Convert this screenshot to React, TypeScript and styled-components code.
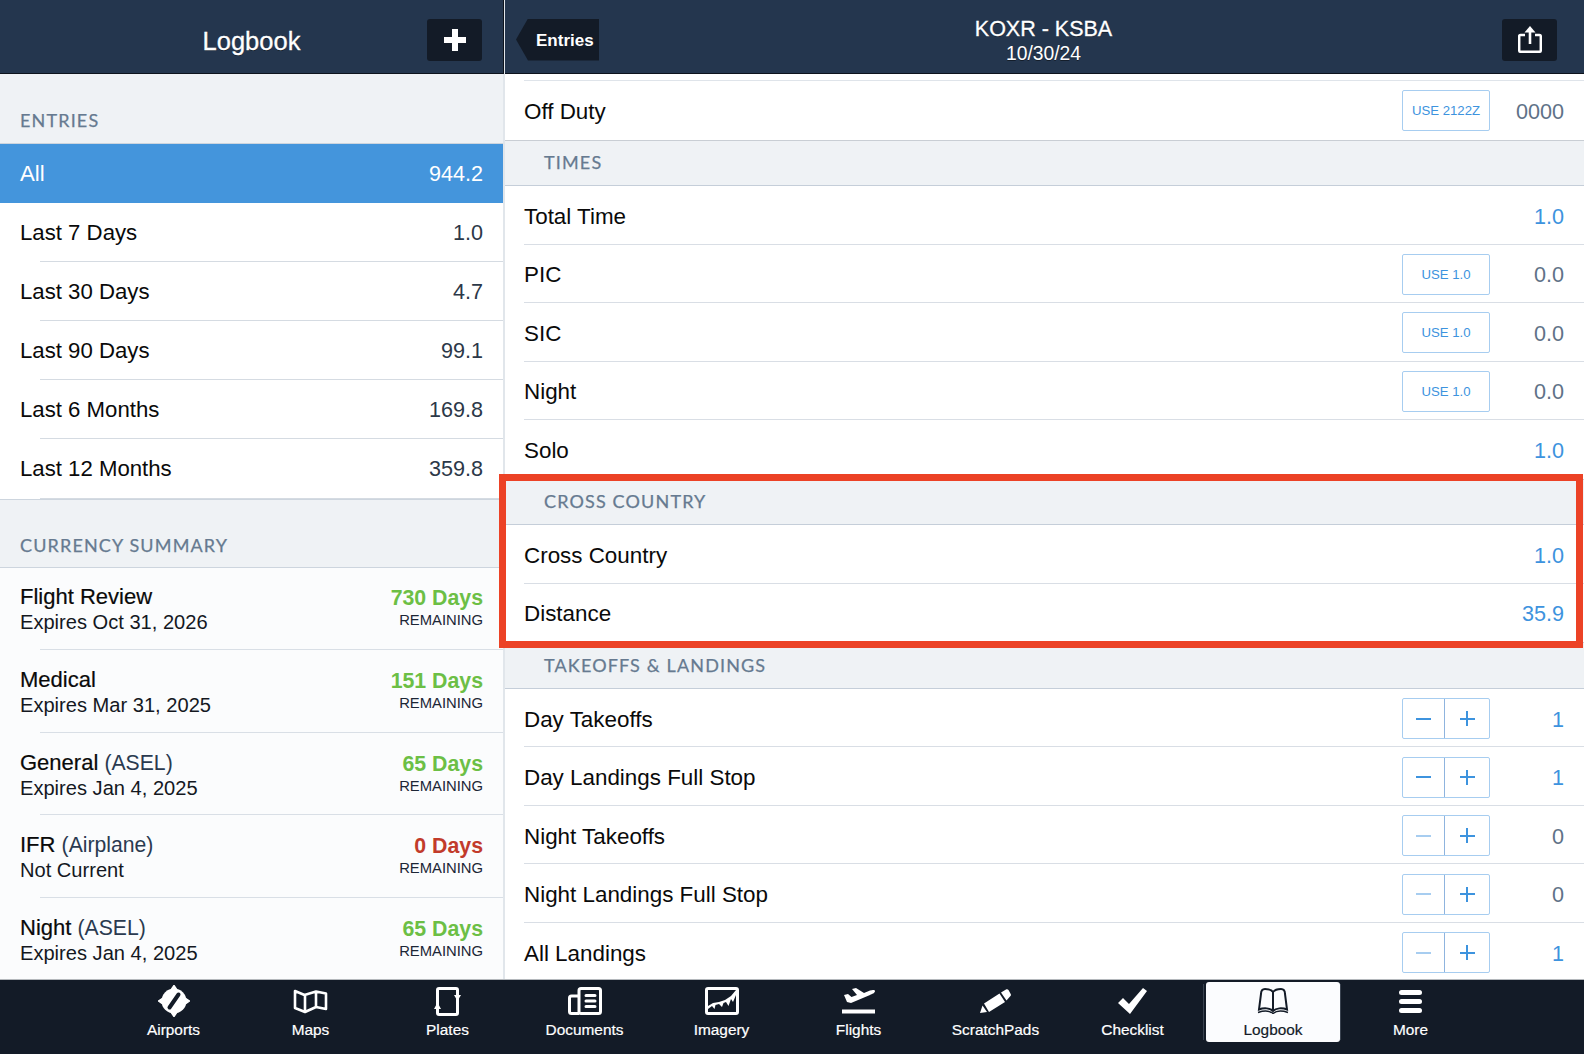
import { FC, ReactNode } from "react";
import styled, { createGlobalStyle } from "styled-components";

const GlobalStyle = createGlobalStyle`
  html, body {
    margin: 0;
    padding: 0;
    background: #fff;
  }
  body {
    font-family: "Liberation Sans", Arial, sans-serif;
    color: #0a0a0a;
  }
`;

const BAR = "#131b27";

const entries = [
  { label: "All", value: "944.2", active: true },
  { label: "Last 7 Days", value: "1.0" },
  { label: "Last 30 Days", value: "4.7" },
  { label: "Last 90 Days", value: "99.1" },
  { label: "Last 6 Months", value: "169.8" },
  { label: "Last 12 Months", value: "359.8" },
];

const currency = [
  { name: "Flight Review", kind: "", sub: "Expires Oct 31, 2026", days: "730 Days" },
  { name: "Medical", kind: "", sub: "Expires Mar 31, 2025", days: "151 Days" },
  { name: "General", kind: "(ASEL)", sub: "Expires Jan 4, 2025", days: "65 Days" },
  { name: "IFR", kind: "(Airplane)", sub: "Not Current", days: "0 Days", late: true },
  { name: "Night", kind: "(ASEL)", sub: "Expires Jan 4, 2025", days: "65 Days" },
];

const landings = [
  { label: "Day Takeoffs", value: "1", off: false, zero: false },
  { label: "Day Landings Full Stop", value: "1", off: false, zero: false },
  { label: "Night Takeoffs", value: "0", off: true, zero: true },
  { label: "Night Landings Full Stop", value: "0", off: true, zero: true },
  { label: "All Landings", value: "1", off: true, zero: false },
];

const AirportsIcon = () => (
  <svg width="32" height="32" viewBox="0 0 32 32">
    <circle cx="16" cy="16" r="12.5" fill="currentColor" />
    <path d="M14 3.5 L16 .5 L18 3.5 Z M14 28.5 L16 31.5 L18 28.5 Z M3.5 14 L.5 16 L3.5 18 Z M28.5 14 L31.5 16 L28.5 18 Z" fill="currentColor" stroke="currentColor" strokeWidth="1.5" />
    <line x1="20.5" y1="9.5" x2="11.5" y2="22.5" stroke={BAR} strokeWidth="4" strokeLinecap="round" />
  </svg>
);

const MapsIcon = () => (
  <svg width="35" height="25" viewBox="0 0 35 25">
    <path d="M2 2 L11.5 6 L23 2.5 L33 4.5 L33 20 L23 18 L12 23 L2 19 Z M12 6 V23 M23 2.5 V18" fill="none" stroke="currentColor" strokeWidth="2.6" strokeLinejoin="round" />
  </svg>
);

const PlatesIcon = () => (
  <svg width="27" height="29" viewBox="0 0 27 29">
    <rect x="3.5" y="1.5" width="20" height="26" rx="1.5" fill="none" stroke="currentColor" strokeWidth="3" />
    <path d="M20 8 H27 L23.5 14 Z M0 22 H7 L3.5 15.5 Z" fill="currentColor" />
  </svg>
);

const DocumentsIcon = () => (
  <svg width="34" height="28" viewBox="0 0 34 28">
    <rect x="11" y="1.5" width="21.5" height="25" rx="2" fill="none" stroke="currentColor" strokeWidth="3" />
    <path d="M11 9 H3.5 C2.3 9 1.5 9.8 1.5 11 V24.5 C1.5 25.7 2.3 26.5 3.5 26.5 H11" fill="none" stroke="currentColor" strokeWidth="3" />
    <path d="M18 8.5 H27 M18 14 H27 M18 19.5 H27" stroke="currentColor" strokeWidth="3" strokeLinecap="round" />
  </svg>
);

const ImageryIcon = () => (
  <svg width="34" height="28" viewBox="0 0 34 28">
    <rect x="1.5" y="1.5" width="31" height="25" rx="1.5" fill="none" stroke="currentColor" strokeWidth="3" />
    <path d="M3 19 L8 16 L14 15 L20 13 L26 9 L31 3 L31 8 L28 15 L26 12 L23.5 19 L21 15 L18.5 16 L17 20 L14 17 L10.5 18 L9.5 22 L7 19 L3 22 Z" fill="currentColor" />
  </svg>
);

const FlightsIcon = () => (
  <svg width="33" height="26" viewBox="0 0 33 26">
    <path d="M2 7 L6 6 L9.5 9 L15 7 L10 1 L14 0 L22 5 L28 2.5 C31 1.5 33 2 33 3 C33 5 30 6 28 7 L9 15 L5 14 Z" fill="currentColor" />
    <rect x="0" y="21.5" width="33" height="4" fill="currentColor" />
  </svg>
);

const ScratchPadsIcon = () => (
  <svg width="31" height="24" viewBox="0 0 31 24">
    <path d="M4 14.5 L19.5 4.5 L25 13 L9 23 Z M21 3.5 L26 .5 C27 0 28 .3 28.5 1 L30.7 5 C31.2 6 31 7 30 7.5 L26.5 11.5 Z M0 24 L2.5 16.5 L7 23 Z" fill="currentColor" />
  </svg>
);

const ChecklistIcon = () => (
  <svg width="29" height="26" viewBox="0 0 29 26">
    <path d="M0 15 L5 10 L11 16 L25 0 L29 3 L12 26 Z" fill="currentColor" />
  </svg>
);

const BookIcon = () => (
  <svg width="32" height="26" viewBox="0 0 32 26">
    <path d="M16 4 C14 1.5 11 1 8 1 C5 1 4 3 4 6 L2 21.5 C7 19.5 13 20 16 23 C19 20 25 19.5 30 21.5 L28 6 C28 3 27 1 24 1 C21 1 18 1.5 16 4 Z M16 4 V23" fill="none" stroke="currentColor" strokeWidth="2" />
    <path d="M1 24.5 C7 22.5 13 23 16 25.5 C19 23 25 22.5 31 24.5" fill="none" stroke="currentColor" strokeWidth="1.5" />
  </svg>
);

const MoreIcon = () => (
  <svg width="23" height="23" viewBox="0 0 23 23">
    <rect x="0" y="0" width="23" height="5" rx="2.5" fill="currentColor" />
    <rect x="0" y="9" width="23" height="5" rx="2.5" fill="currentColor" />
    <rect x="0" y="18" width="23" height="5" rx="2.5" fill="currentColor" />
  </svg>
);

const PlusIcon = () => (
  <svg width="22" height="22" viewBox="0 0 22 22">
    <path d="M11 0 V22 M0 11 H22" stroke="#fff" strokeWidth="6" />
  </svg>
);

const ShareIcon = () => (
  <svg width="24" height="27" viewBox="0 0 24 27">
    <path d="M7 9 H2.5 C1.6 9 1.2 9.5 1.2 10.4 V24.2 C1.2 25.2 1.7 25.8 2.6 25.8 H21.4 C22.3 25.8 22.8 25.2 22.8 24.2 V10.4 C22.8 9.5 22.4 9 21.5 9 H17" fill="none" stroke="#fff" strokeWidth="2.5" />
    <path d="M12 4 V18" stroke="#fff" strokeWidth="2.6" />
    <path d="M6.5 6.5 L12 0 L17.5 6.5 Z" fill="#fff" />
  </svg>
);

const tabs: { label: string; icon: ReactNode; active?: boolean }[] = [
  { label: "Airports", icon: <AirportsIcon /> },
  { label: "Maps", icon: <MapsIcon /> },
  { label: "Plates", icon: <PlatesIcon /> },
  { label: "Documents", icon: <DocumentsIcon /> },
  { label: "Imagery", icon: <ImageryIcon /> },
  { label: "Flights", icon: <FlightsIcon /> },
  { label: "ScratchPads", icon: <ScratchPadsIcon /> },
  { label: "Checklist", icon: <ChecklistIcon /> },
  { label: "Logbook", icon: <BookIcon />, active: true },
  { label: "More", icon: <MoreIcon /> },
];

const Stepper: FC<{ off?: boolean }> = ({ off }) => (
  <StepperBox>
    <StepperHalf>
      <Minus $off={off} />
    </StepperHalf>
    <StepperHalf>
      <Cross />
    </StepperHalf>
  </StepperBox>
);

const TimeRow: FC<{ label: string; value: string; use?: string; muted?: boolean; last?: boolean }> = (props) => (
  <FormRow $last={props.last}>
    <FormLabel>{props.label}</FormLabel>
    {props.use && <UseButton>{props.use}</UseButton>}
    <FormValue $muted={props.muted}>{props.value}</FormValue>
  </FormRow>
);

const App: FC = () => {
  return (
    <Page>
      <GlobalStyle />
      <Panes>
        <LeftPane>
          <LeftHeader>
            <span />
            <HeaderTitle>Logbook</HeaderTitle>
            <DarkButton>
              <PlusIcon />
            </DarkButton>
          </LeftHeader>
          <ListHead $first>ENTRIES</ListHead>
          {entries.map((e) => (
            <EntryRow key={e.label} $active={e.active}>
              <span>{e.label}</span>
              <span>{e.value}</span>
            </EntryRow>
          ))}
          <ListHead>CURRENCY SUMMARY</ListHead>
          {currency.map((c) => (
            <CurrencyRow key={c.name + c.sub}>
              <CurrencyLeft>
                <CurrencyName>
                  {c.name} {c.kind && <CurrencyKind>{c.kind}</CurrencyKind>}
                </CurrencyName>
                <CurrencySub>{c.sub}</CurrencySub>
              </CurrencyLeft>
              <CurrencyRight>
                <Days $late={c.late}>{c.days}</Days>
                <Remaining>REMAINING</Remaining>
              </CurrencyRight>
            </CurrencyRow>
          ))}
        </LeftPane>

        <RightPane>
          <RightHeader>
            <BackButton>Entries</BackButton>
            <RouteBlock>
              <Route>KOXR - KSBA</Route>
              <RouteDate>10/30/24</RouteDate>
            </RouteBlock>
            <ShareButton>
              <ShareIcon />
            </ShareButton>
          </RightHeader>
          <FormBody>
            <FirstLine />
            <TimeRow label="Off Duty" value="0000" use="USE 2122Z" muted last />
            <FormSection>TIMES</FormSection>
            <TimeRow label="Total Time" value="1.0" />
            <TimeRow label="PIC" value="0.0" use="USE 1.0" muted />
            <TimeRow label="SIC" value="0.0" use="USE 1.0" muted />
            <TimeRow label="Night" value="0.0" use="USE 1.0" muted />
            <TimeRow label="Solo" value="1.0" last />
            <FormSection>CROSS COUNTRY</FormSection>
            <TimeRow label="Cross Country" value="1.0" />
            <TimeRow label="Distance" value="35.9" last />
            <FormSection>TAKEOFFS &amp; LANDINGS</FormSection>
            {landings.map((l) => (
              <FormRow key={l.label}>
                <FormLabel>{l.label}</FormLabel>
                <Stepper off={l.off} />
                <FormValue $muted={l.zero}>{l.value}</FormValue>
              </FormRow>
            ))}
          </FormBody>
        </RightPane>
      </Panes>

      <TabBar>
        {tabs.map((t) => (
          <Tab key={t.label} $active={t.active}>
            <TabIcon>{t.icon}</TabIcon>
            <TabLabel>{t.label}</TabLabel>
          </Tab>
        ))}
      </TabBar>

      <Highlight />
    </Page>
  );
};

export default App;

const Page = styled.div`
  position: relative;
  width: 1584px;
  height: 1054px;
  overflow: hidden;
  display: flex;
  flex-direction: column;
`;

const Panes = styled.div`
  flex: none;
  height: 980px;
  display: flex;
  border-bottom: 1px solid #b4b8bc;
  box-sizing: border-box;
  overflow: hidden;
`;

const LeftPane = styled.div`
  flex: none;
  width: 505px;
  box-sizing: border-box;
  border-right: 2px solid #e1e6eb;
  background: #eff2f5;
`;

const RightPane = styled.div`
  flex: 1;
  min-width: 0;
  background: #fff;
`;

const LeftHeader = styled.div`
  height: 74px;
  box-sizing: border-box;
  margin-right: -1px;
  padding: 7px 21px 1px 21px;
  display: grid;
  grid-template-columns: 55px 1fr 55px;
  align-items: center;
  background: #24364e;
  border-bottom: 1px solid #0d131c;
  border-right: 1px solid #0d131c;
`;

const HeaderTitle = styled.div`
  color: #fff;
  font-size: 25.5px;
  text-align: center;
  padding-top: 3px;
  -webkit-text-stroke: 0.3px #fff;
  text-shadow: 0 1px 0 rgba(0, 0, 0, 0.45);
`;

const DarkButton = styled.div`
  width: 55px;
  height: 42px;
  border-radius: 3px;
  background: ${BAR};
  display: flex;
  align-items: center;
  justify-content: center;
`;

const RightHeader = styled.div`
  height: 74px;
  box-sizing: border-box;
  padding: 7px 27px 1px 11px;
  display: grid;
  grid-template-columns: 1fr auto 1fr;
  align-items: center;
  background: #24364e;
  border-bottom: 1px solid #0d131c;
`;

const BackButton = styled.div`
  justify-self: start;
  width: 83px;
  height: 42px;
  box-sizing: border-box;
  padding-left: 20px;
  line-height: 44px;
  font-size: 17px;
  font-weight: bold;
  color: #fff;
  background: ${BAR};
  clip-path: polygon(12px 0, 100% 0, 100% 100%, 12px 100%, 0 50%);
`;

const ShareButton = styled(DarkButton)`
  justify-self: end;
`;

const RouteBlock = styled.div`
  padding: 2px 0 0 14px;
  text-align: center;
  color: #fff;
  text-shadow: 0 1px 0 rgba(0, 0, 0, 0.45);
`;

const Route = styled.div`
  font-size: 21.5px;
  line-height: 26px;
  -webkit-text-stroke: 0.3px #fff;
`;

const RouteDate = styled.div`
  font-size: 19.3px;
  line-height: 23px;
`;

const ListHead = styled.div<{ $first?: boolean }>`
  height: ${(p) => (p.$first ? "70px" : "69px")};
  box-sizing: border-box;
  padding: 0 0 ${(p) => (p.$first ? "12px" : "11px")} 20px;
  display: flex;
  align-items: flex-end;
  font-family: Lato, sans-serif;
  font-size: 18px;
  letter-spacing: 1.15px;
  -webkit-text-stroke: 0.25px #667a90;
  color: #667a90;
  border-top: ${(p) => (p.$first ? "0" : "1px solid #cdd5de")};
  border-bottom: 1px solid #cdd5de;
`;

const EntryRow = styled.div<{ $active?: boolean }>`
  height: 59.1px;
  box-sizing: border-box;
  padding-right: 20px;
  padding-left: 20px;
  display: flex;
  align-items: center;
  justify-content: space-between;
  font-size: 22.2px;
  color: ${(p) => (p.$active ? "#fff" : "#0a0a0a")};
  background: ${(p) =>
    p.$active
      ? "#4495dc"
      : "linear-gradient(#fff calc(100% - 1px), #d5dbe2 calc(100% - 1px)) no-repeat 40px 0, #fff"};

  & > span:last-child {
    font-size: 21.6px;
    color: ${(p) => (p.$active ? "#fff" : "#2c3848")};
  }
`;

const CurrencyRow = styled.div`
  height: 82.6px;
  box-sizing: border-box;
  padding: 0 20px;
  display: flex;
  align-items: center;
  justify-content: space-between;
  background: linear-gradient(#fbfcfd calc(100% - 1.5px), #d9dfe6 calc(100% - 1.5px)) no-repeat 40px 0, #fbfcfd;
`;

const CurrencyLeft = styled.div`
  padding-top: 2px;
`;

const CurrencyName = styled.div`
  font-size: 22px;
  line-height: 25px;
  color: #0a0a0a;
  -webkit-text-stroke: 0.2px #0a0a0a;
`;

const CurrencyKind = styled.span`
  font-size: 21.2px;
  color: #2a3a50;
  -webkit-text-stroke: 0;
`;

const CurrencySub = styled.div`
  font-size: 20.1px;
  line-height: 26px;
  color: #14181f;
`;

const CurrencyRight = styled.div`
  text-align: right;
  margin-top: -2px;
`;

const Days = styled.div<{ $late?: boolean }>`
  font-size: 21.3px;
  line-height: 25px;
  font-weight: bold;
  color: ${(p) => (p.$late ? "#c23b2b" : "#6cbf45")};
`;

const Remaining = styled.div`
  font-size: 14.8px;
  line-height: 18px;
  color: #1c2636;
`;

const FormBody = styled.div`
  padding-top: 6px;
`;

const FirstLine = styled.div`
  height: 1px;
  margin-left: 19px;
  background: #dfe4ea;
`;

const FormRow = styled.div<{ $last?: boolean }>`
  height: 58.5px;
  box-sizing: border-box;
  margin-left: 19px;
  padding-right: 20px;
  display: flex;
  align-items: center;
  border-bottom: 1px solid ${(p) => (p.$last ? "transparent" : "#d9dee5")};
`;

const FormLabel = styled.div`
  flex: 1;
  padding-top: 4px;
  font-size: 22.4px;
`;

const FormValue = styled.div<{ $muted?: boolean }>`
  width: 74px;
  padding-top: 4px;
  text-align: right;
  font-size: 21.6px;
  color: ${(p) => (p.$muted ? "#5f7288" : "#3d93de")};
`;

const UseButton = styled.div`
  width: 88px;
  height: 41px;
  margin-top: 2px;
  box-sizing: border-box;
  display: flex;
  align-items: center;
  justify-content: center;
  font-size: 13.2px;
  color: #3d93de;
  border: 1px solid #a7cdf0;
  border-radius: 2px;
`;

const FormSection = styled.div`
  height: 46.6px;
  box-sizing: border-box;
  padding: 0 0 1px 39px;
  display: flex;
  align-items: center;
  font-family: Lato, sans-serif;
  font-size: 18px;
  letter-spacing: 1.15px;
  -webkit-text-stroke: 0.25px #667a90;
  color: #667a90;
  background: #eff2f5;
  border-top: 1px solid #c9ced4;
  border-bottom: 1px solid #c5ced9;
`;

const StepperBox = styled.div`
  width: 88px;
  height: 41px;
  margin-top: 2px;
  box-sizing: border-box;
  display: grid;
  grid-template-columns: 41px 1fr;
  border: 1px solid #a7cdf0;
  border-radius: 2px;
`;

const StepperHalf = styled.div`
  display: flex;
  align-items: center;
  justify-content: center;

  & + & {
    border-left: 1px solid #8fb4de;
  }
`;

const Minus = styled.span<{ $off?: boolean }>`
  width: 15px;
  height: 2px;
  background: ${(p) => (p.$off ? "#a7cdf0" : "#3d93de")};
`;

const Cross = styled.span`
  position: relative;
  width: 15px;
  height: 2px;
  background: #3d93de;

  &::after {
    content: "";
    position: absolute;
    left: 6.5px;
    top: -6.5px;
    width: 2px;
    height: 15px;
    background: #3d93de;
  }
`;

const TabBar = styled.div`
  flex: 1;
  padding: 2px 0 0 105px;
  display: flex;
  align-items: flex-start;
  background: ${BAR};
`;

const Tab = styled.div<{ $active?: boolean }>`
  position: relative;
  flex: none;
  width: ${(p) => (p.$active ? "134px" : "137px")};
  height: 60px;
  margin: ${(p) => (p.$active ? "0 2px 0 5px" : "0")};
  display: flex;
  flex-direction: column;
  align-items: center;
  color: ${(p) => (p.$active ? "#131b27" : "#fff")};
  background: ${(p) => (p.$active ? "#fbfcfe" : "transparent")};
  border-radius: 3px;

  ${(p) =>
    p.$active &&
    `
    &::before, &::after {
      content: "";
      position: absolute;
      top: 2px;
      bottom: 2px;
      width: 1px;
      background: #3a4350;
    }
    &::before { left: -3px; }
    &::after { right: -1px; }
  `}
`;

const TabIcon = styled.div`
  height: 38px;
  display: flex;
  align-items: center;
  justify-content: center;
`;

const TabLabel = styled.div`
  font-size: 15.4px;
  line-height: 20px;
  -webkit-text-stroke: 0.2px currentColor;
`;

const Highlight = styled.div`
  position: absolute;
  left: 499px;
  top: 474px;
  width: 1084px;
  height: 174px;
  box-sizing: border-box;
  border: 7px solid #ec4226;
`;
